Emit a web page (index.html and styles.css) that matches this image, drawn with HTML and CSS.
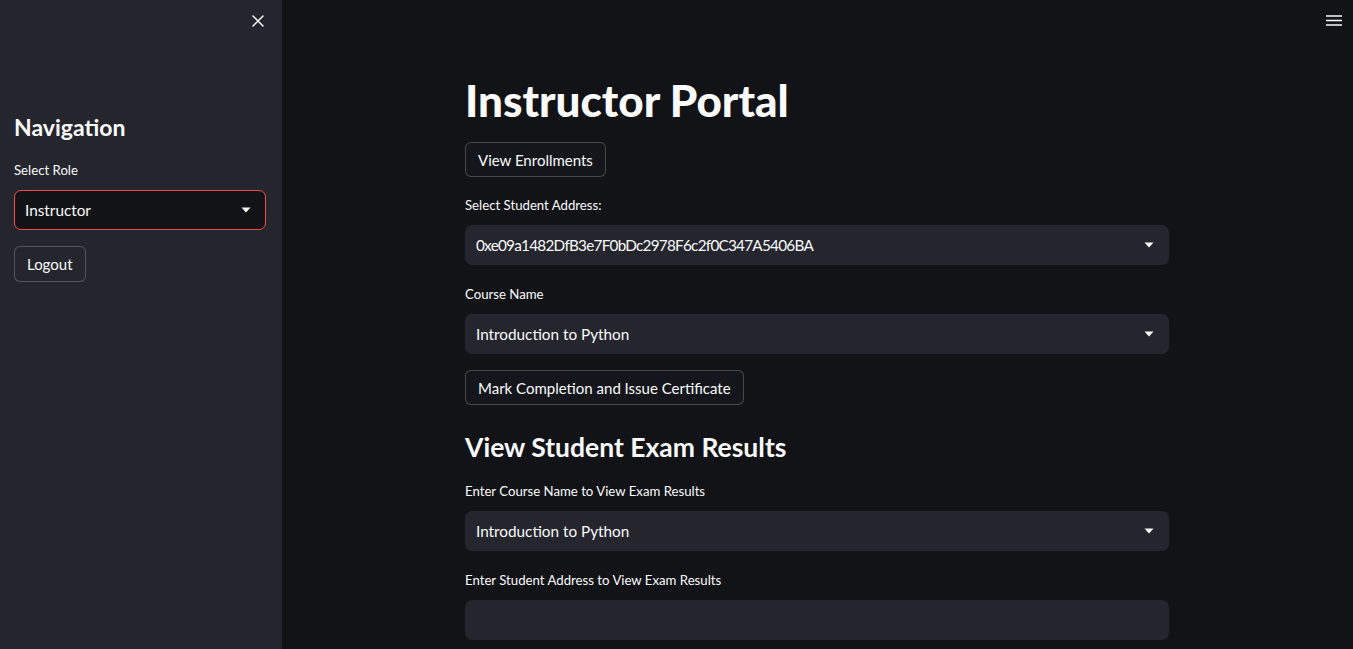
FILE: index.html
```html
<!DOCTYPE html>
<html lang="en">
<head>
<meta charset="utf-8">
<title>Instructor Portal</title>
<link rel="stylesheet" href="styles.css">
</head>
<body>
<div class="app">
  <aside class="sidebar">
    <div class="sidebar-top">
      <button class="icon-btn close" aria-label="Close sidebar">
        <svg width="12" height="12" viewBox="0 0 12 12"><path d="M1 1 L11 11 M11 1 L1 11" stroke="#fafafa" stroke-width="1.5" stroke-linecap="round"/></svg>
      </button>
    </div>
    <div class="sidebar-content">
      <h2 class="side-heading">Navigation</h2>
      <div class="field">
        <div class="label">Select Role</div>
        <div class="select select-focus">
          <span>Instructor</span>
          <svg class="caret" width="10" height="6" viewBox="0 0 10 6"><path d="M0.5 0.5 L9.5 0.5 L5 5.5 Z" fill="#fafafa"/></svg>
        </div>
      </div>
      <button class="btn btn-side">Logout</button>
    </div>
  </aside>
  <main class="main">
    <div class="topbar">
      <svg class="menu" width="16" height="11" viewBox="0 0 16 11"><path d="M0 1 H16 M0 5.5 H16 M0 10 H16" stroke="#fafafa" stroke-width="1.6"/></svg>
    </div>
    <div class="block">
      <h1 class="title">Instructor Portal</h1>
      <button class="btn btn-first">View Enrollments</button>
      <div class="field f1">
        <div class="label">Select Student Address:</div>
        <div class="select">
          <span class="addr">0xe09a1482DfB3e7F0bDc2978F6c2f0C347A5406BA</span>
          <svg class="caret" width="10" height="6" viewBox="0 0 10 6"><path d="M0.5 0.5 L9.5 0.5 L5 5.5 Z" fill="#fafafa"/></svg>
        </div>
      </div>
      <div class="field">
        <div class="label">Course Name</div>
        <div class="select">
          <span>Introduction to Python</span>
          <svg class="caret" width="10" height="6" viewBox="0 0 10 6"><path d="M0.5 0.5 L9.5 0.5 L5 5.5 Z" fill="#fafafa"/></svg>
        </div>
      </div>
      <button class="btn btn-mark">Mark Completion and Issue Certificate</button>
      <h3 class="subheading">View Student Exam Results</h3>
      <div class="field f-after-h3">
        <div class="label">Enter Course Name to View Exam Results</div>
        <div class="select">
          <span>Introduction to Python</span>
          <svg class="caret" width="10" height="6" viewBox="0 0 10 6"><path d="M0.5 0.5 L9.5 0.5 L5 5.5 Z" fill="#fafafa"/></svg>
        </div>
      </div>
      <div class="field">
        <div class="label">Enter Student Address to View Exam Results</div>
        <div class="input"></div>
      </div>
    </div>
  </main>
</div>
</body>
</html>
```

FILE: styles.css
```css
* { box-sizing: border-box; }
html, body { margin: 0; padding: 0; height: 100%; }
body {
  background: #121317;
  color: #fafafa;
  font-family: "Lato", "Open Sans", sans-serif;
  overflow: hidden;
}
.app {
  display: flex;
  height: 649px;
}
.sidebar {
  width: 282px;
  flex: none;
  background: #24252d;
  padding: 0 16px 0 14px;
}
.sidebar-top {
  height: 70px;
  display: flex;
  justify-content: flex-end;
  align-items: flex-start;
  padding-top: 15px;
  padding-right: 2px;
}
.icon-btn {
  background: none;
  border: 0;
  padding: 0;
  width: 12px;
  height: 12px;
  display: flex;
}
.side-heading {
  margin: 0;
  font-size: 23px;
  font-weight: 700;
  line-height: 34px;
  padding-top: 40px;
}
.sidebar .field { margin-top: 16px; }
.label {
  font-size: 13.2px;
  line-height: 20px;
  margin-bottom: 10px;
}
.select, .input {
  height: 40px;
  background: #24252d;
  border-radius: 7px;
  display: flex;
  align-items: center;
  justify-content: space-between;
  padding: 0 14px 0 10px;
  font-size: 15.3px;
  border: 1px solid transparent;
}
.addr { letter-spacing: -0.75px; }
.select-focus {
  background: #121317;
  border-color: #ff4b4b;
  padding-left: 10px;
}
.caret { flex: none; }
.btn {
  display: block;
  font-family: inherit;
  font-size: 15px;
  color: #fafafa;
  background: #14161c;
  border: 1px solid rgba(250, 250, 250, 0.22);
  border-radius: 6px;
  height: 35px;
  padding: 0 12px;
  text-align: left;
}
.btn-side {
  margin-top: 16px;
  background: #24252d;
  height: 36px;
}
.main {
  flex: 1;
  position: relative;
  display: flex;
  justify-content: center;
  padding-right: 1px;
}
.topbar {
  position: absolute;
  top: 15px;
  right: 11px;
}
.menu { display: block; }
.block {
  width: 704px;
  padding-top: 74px;
  display: flex;
  flex-direction: column;
  align-items: flex-start;
}
.block > .field { width: 100%; margin-top: 19px; }
.title {
  margin: 0;
  font-size: 44px;
  line-height: 52px;
  font-weight: 900;
}
.btn-first { margin-top: 16px; }
.block > .f1 { margin-top: 18px; }
.btn-mark { margin-top: 16px; }
.subheading {
  margin: 25px 0 0;
  font-size: 26.5px;
  line-height: 34px;
  font-weight: 700;
}
.block > .f-after-h3 { margin-top: 17px; }
```
